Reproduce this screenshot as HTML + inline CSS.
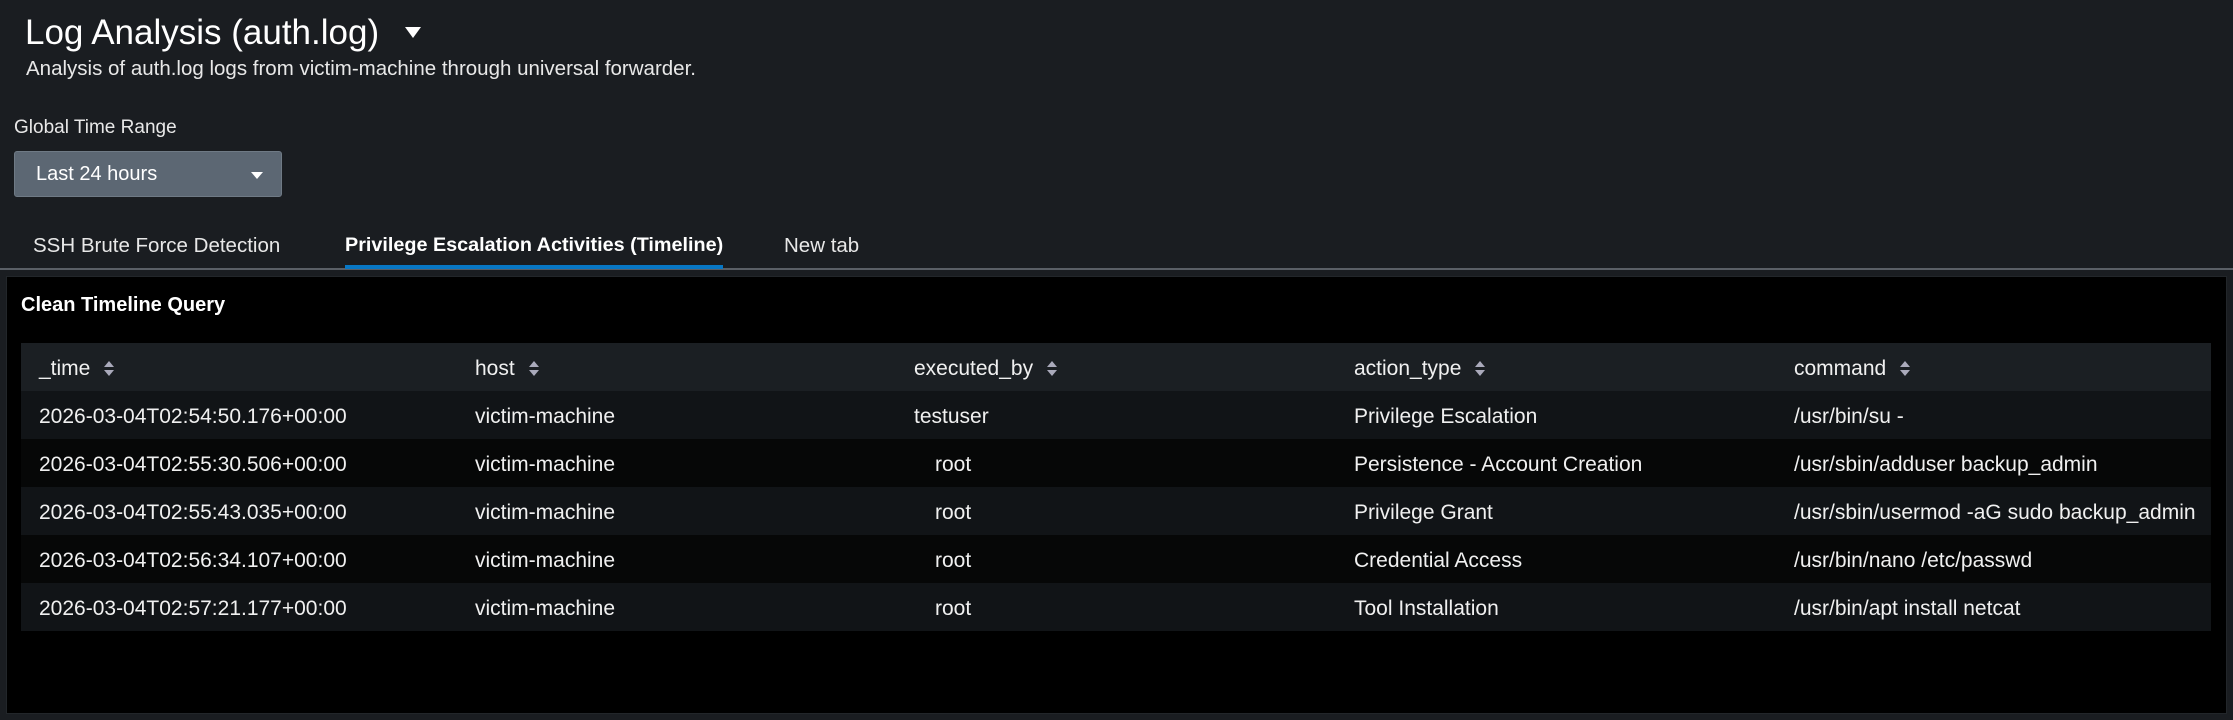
<!DOCTYPE html>
<html><head><meta charset="utf-8"><style>
*{margin:0;padding:0;box-sizing:border-box}
body{width:2233px;height:720px;background:#1a1d21;font-family:"Liberation Sans",sans-serif;color:#fff;position:relative;overflow:hidden}
.abs{position:absolute;white-space:nowrap}
.title{left:25px;top:13px;font-size:35px}
.caret{left:405px;top:27px;width:0;height:0;border-left:8px solid transparent;border-right:8px solid transparent;border-top:11px solid #fff}
.sub{left:26px;top:57px;font-size:20.5px;color:#e8e8e8}
.gtr{left:14px;top:117px;font-size:19px;color:#e8e8e8}
.dd{left:14px;top:151px;width:268px;height:46px;background:#5c6773;border:1px solid #6f7a85;border-radius:3px}
.dd span{position:absolute;left:21px;top:11px;font-size:20px}
.dd i{position:absolute;left:236px;top:20px;border-left:6px solid transparent;border-right:6px solid transparent;border-top:7px solid #fff}
.tab{top:234px;font-size:20.5px;color:#e8e8e8}
.line{left:0;top:268px;width:2233px;height:2px;background:#5a5f66}
.ul{left:345px;top:265px;width:378px;height:4px;background:#0877c4}
.panel{left:6px;top:276px;width:2221px;height:438px;background:#000;border:1px solid #22262a}
.ptitle{left:21px;top:294px;font-size:20px;font-weight:bold}
table{position:absolute;left:21px;top:343px;width:2190px;border-collapse:collapse}
td,th{height:48px;padding-left:18px;padding-top:3px;font-size:21px;font-weight:normal;text-align:left;color:#f0f0f0}
th{background:#1b1f23}
tr:nth-child(even) td{background:#111417}
tr:nth-child(odd) td{background:#060707}
.s{display:inline-block;width:10px;height:16px;position:relative;margin-left:14px;vertical-align:-2px}
.s:before{content:"";position:absolute;left:0;top:0;border-left:5px solid transparent;border-right:5px solid transparent;border-bottom:6px solid #aab}
.s:after{content:"";position:absolute;left:0;top:9px;border-left:5px solid transparent;border-right:5px solid transparent;border-top:6px solid #aab}
.r{padding-left:39px}
</style></head><body>
<div class="abs title">Log Analysis (auth.log)</div>
<div class="abs caret"></div>
<div class="abs sub">Analysis of auth.log logs from victim-machine through universal forwarder.</div>
<div class="abs gtr">Global Time Range</div>
<div class="abs dd"><span>Last 24 hours</span><i></i></div>
<div class="abs tab" style="left:33px">SSH Brute Force Detection</div>
<div class="abs tab" style="left:345px;font-weight:bold;color:#fff;font-size:19.8px">Privilege Escalation Activities (Timeline)</div>
<div class="abs tab" style="left:784px">New tab</div>
<div class="abs line"></div>
<div class="abs ul"></div>
<div class="abs panel"></div>
<div class="abs ptitle">Clean Timeline Query</div>
<table>
<colgroup><col style="width:436px"><col style="width:439px"><col style="width:440px"><col style="width:440px"><col style="width:435px"></colgroup>
<tr><th>_time<span class="s"></span></th><th>host<span class="s"></span></th><th>executed_by<span class="s"></span></th><th>action_type<span class="s"></span></th><th>command<span class="s"></span></th></tr>
<tr><td>2026-03-04T02:54:50.176+00:00</td><td>victim-machine</td><td>testuser</td><td>Privilege Escalation</td><td>/usr/bin/su -</td></tr>
<tr><td>2026-03-04T02:55:30.506+00:00</td><td>victim-machine</td><td class="r">root</td><td>Persistence - Account Creation</td><td>/usr/sbin/adduser backup_admin</td></tr>
<tr><td>2026-03-04T02:55:43.035+00:00</td><td>victim-machine</td><td class="r">root</td><td>Privilege Grant</td><td>/usr/sbin/usermod -aG sudo backup_admin</td></tr>
<tr><td>2026-03-04T02:56:34.107+00:00</td><td>victim-machine</td><td class="r">root</td><td>Credential Access</td><td>/usr/bin/nano /etc/passwd</td></tr>
<tr><td>2026-03-04T02:57:21.177+00:00</td><td>victim-machine</td><td class="r">root</td><td>Tool Installation</td><td>/usr/bin/apt install netcat</td></tr>
</table>
</body></html>
